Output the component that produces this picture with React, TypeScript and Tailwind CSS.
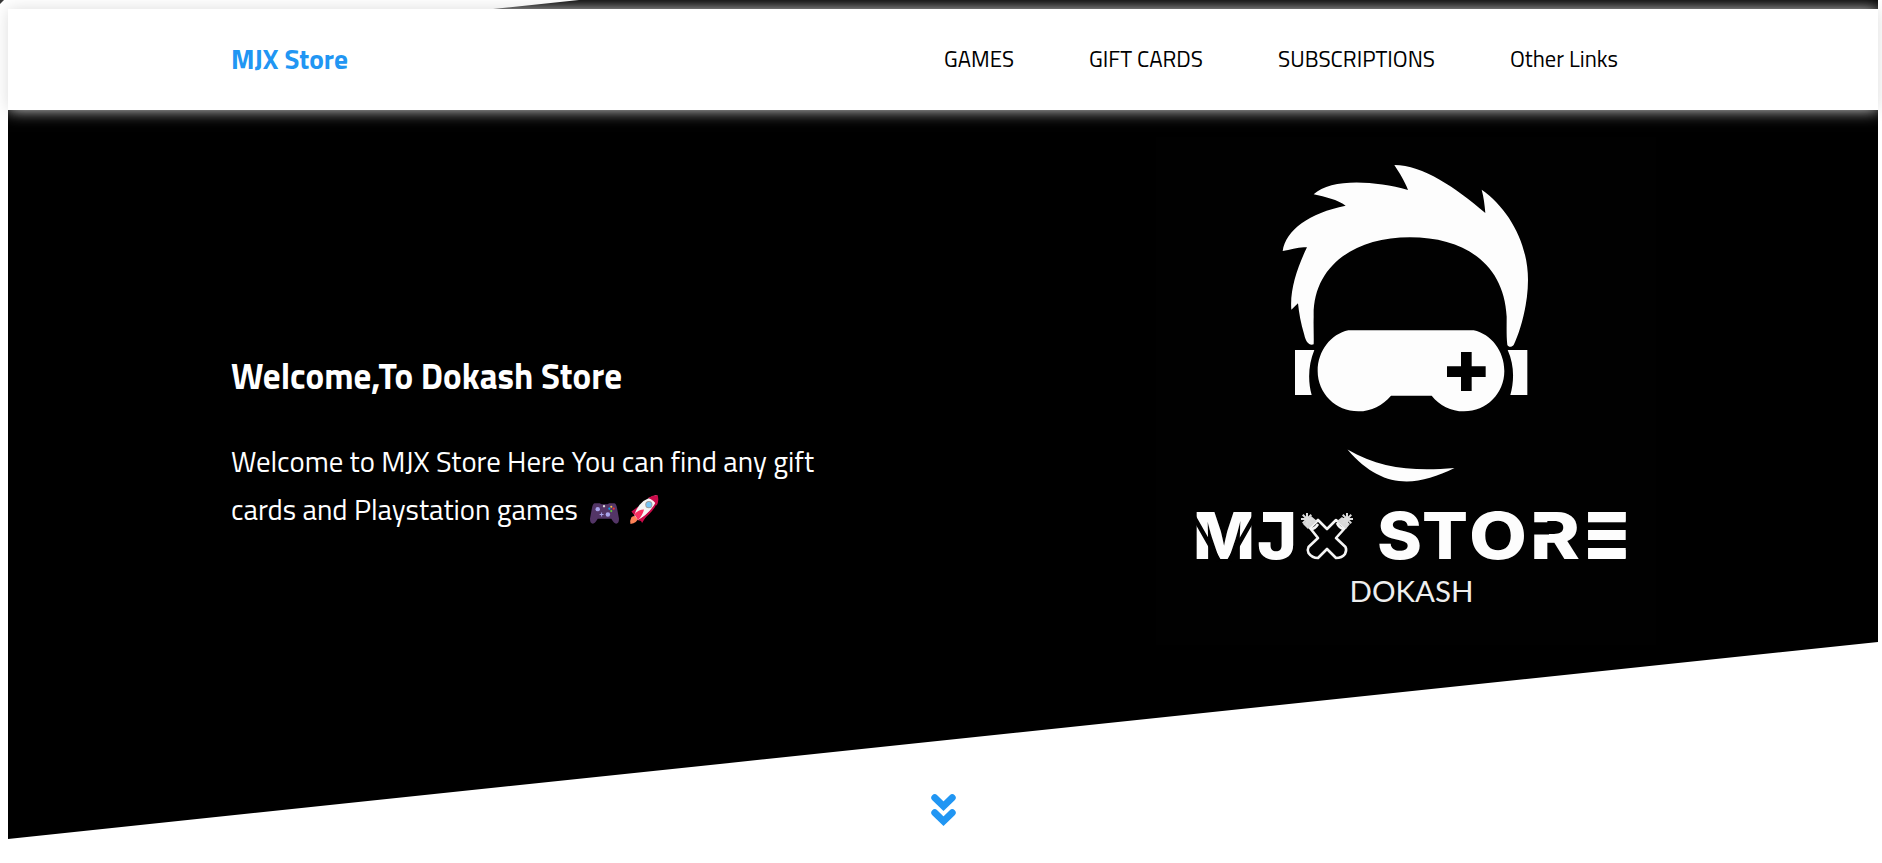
import React from "react";

const links = [
  { label: "GAMES", cls: "w-[70px] mr-[75px]", w: 70 },
  { label: "GIFT CARDS", cls: "w-[114px] mr-[75px]", w: 114 },
  { label: "SUBSCRIPTIONS", cls: "w-[157px] mr-[75px]", w: 157 },
  { label: "Other Links", cls: "w-[108px]", w: 108 },
];

function Fit({ text, width, size, weight, fill }: { text: string; width: number; size: number; weight: number; fill: string }) {
  return (
    <svg width={width} height={size * 1.5} className="block overflow-visible" aria-label={text}>
      <text x={0} y={size * 1.1} textLength={width} lengthAdjust="spacingAndGlyphs" fontSize={size} fontWeight={weight} fill={fill} fontFamily="'Titillium Web','Open Sans',sans-serif">
        {text}
      </text>
    </svg>
  );
}

function Letter({ c, x, w, y = 558.5, size = 64 }: { c: string; x: number; w: number; y?: number; size?: number }) {
  return (
    <text x={x} y={y} textLength={w} lengthAdjust="spacingAndGlyphs" fontSize={size} fontWeight={800} fontFamily="Inter, sans-serif">
      {c}
    </text>
  );
}

function Burst({ x, y }: { x: number; y: number }) {
  return (
    <g stroke="#ddd" strokeWidth="2">
      {[0, 45, 90, 135].map((a) => (
        <line key={a} x1={x - 6} y1={y} x2={x + 6} y2={y} transform={`rotate(${a} ${x} ${y})`} />
      ))}
    </g>
  );
}

function StoreLogo() {
  return (
    <svg viewBox="1156 137 500 508" className="block h-[508px] w-[500px] shrink-0 bg-[#010101]" fill="#fdfdfd">
      <g transform="translate(1260 150) scale(.33333)">
        <path d="M161 583C147 588 137 574 133 555C122 520 117 488 114 460L94 479C89 420 112 351 141 292C118 289 94 298 68 303C77 240 148 189 257 167C233 149 196 141 161 133C211 85 341 91 444 120C435 95 418 68 403 45C489 46 586 112 676 189C674 164 671 140 665 119C744 174 804 277 804 390C804 467 779 549 761 585C755 592 746 592 742 585C739 560 740 530 740 500C732 340 612 262 450 262C278 262 158 352 161 500C160 530 162 558 161 583Z" />
        <path d="M265 541H641C693 552 733 603 733 663C733 730 680 784 612 784C573 784 538 766 515 737H393C368 766 334 784 295 784C227 784 173 730 173 663C173 603 213 552 265 541Z" />
        <path d="M105 600H163C145 644 143 692 155 735H105ZM743 600H802V735H751C763 692 763 644 743 600Z" />
        <path fill="#010101" d="M603 606H635V649H677V681H635V723H603V681H561V649H603Z" />
      </g>
      <path d="M1347.500 449.500C1380 469 1415 471.500 1454.500 468C1416 487 1382 490 1347.500 449.500Z" />
      <Letter c="M" x={1193} w={62} />
      <path d="M1194 517L1219 561M1254 517L1229 561" stroke="#010101" strokeWidth="4.500" />
      <Letter c="J" x={1257} w={40} />
      <rect x="1263" y="512" width="20" height="10" />
      <g fill="none" stroke="#f5f5f5" strokeWidth="2.600" strokeLinejoin="round">
        <path d="M1310 528L1318 520L1327 529L1336 520L1345 528L1336 538L1345.500 547Q1347 550 1345 554Q1342 558 1336 558L1327 549L1318 558Q1312 558 1308.500 553Q1307 550 1308.500 547L1318 538Z" />
        <path d="M1311 529Q1315 529 1318 524M1337 523Q1339 528 1344 529" />
      </g>
      <path d="M1303 524L1311 516L1317 521L1308 529ZM1342 517L1350 524L1346 529L1337 521Z" fill="#d9d9d9" />
      <Burst x={1307} y={519} />
      <Burst x={1347} y={519} />
      <Letter c="S" x={1377} w={45} />
      <Letter c="T" x={1422} w={46} />
      <Letter c="O" x={1469} w={58} />
      <Letter c="R" x={1530} w={50} />
      <Letter c="E" x={1584} w={45} />
      <rect x="1588.300" y="512" width="37.400" height="46.500" />
      <g fill="#010101">
        <rect x="1585" y="522.300" width="44" height="7.700" />
        <rect x="1585" y="540" width="44" height="8" />
        <rect x="1533" y="522.300" width="16" height="12.200" />
      </g>
      <text x="1349.500" y="602" textLength="124" lengthAdjust="spacingAndGlyphs" fontSize="28.500" fontFamily="Lato, sans-serif" fill="#eee">DOKASH</text>
    </svg>
  );
}

function Controller() {
  return (
    <svg viewBox="0 0 30 22" className="h-[22px] w-[29px]">
      <path fill="#533566" d="M5 1H10L12 2H18L20 1H25Q27 1 28 6L30 17Q30 22 27 22Q25 22 22 17H8Q5 22 3 22Q0 22 0 17L2 6Q3 1 5 1Z" />
      <g fill="#a9a5ec"><circle cx="8" cy="7" r="2.300" /><circle cx="18.500" cy="12.500" r="2.300" /><path d="M10 12h1.500v-1.500h1V12H14v1h-1.500v1.500h-1V13H10Z" /></g>
      <circle cx="14.500" cy="4" r="1.200" fill="#ddd" /><circle cx="22" cy="4.500" r="1.100" fill="#f9c23c" /><circle cx="24.500" cy="6.500" r="1.100" fill="#f8312f" /><circle cx="20" cy="6.500" r="1.100" fill="#00a6ed" /><circle cx="22" cy="9" r="1.100" fill="#5fc93c" />
    </svg>
  );
}

function Rocket() {
  return (
    <svg viewBox="0 0 30 30" className="h-[29px] w-[30px]">
      <path fill="#ff8257" d="M2 23Q6 20 9 24Q8 29 1 30Q0 27 2 23Z" />
      <path fill="#ca0b4a" d="M9 12L2 17L5 21L11 25L13 29L18 21Z" />
      <path fill="#f4f4f4" d="M5 21Q9 5 28 0Q30 8 22 16Q16 22 9 26Z" />
      <path fill="#ca0b4a" d="M19 3Q24 0 29 0Q31 6 28 11Q26 5 19 3Z" />
      <path fill="#ca0b4a" d="M28 9Q25 17 12 27L9 26Q22 18 28 6Z" />
      <path fill="#f92f60" d="M5 20Q9 15 15 15Q14 20 9 26Z" />
      <circle cx="20" cy="10" r="3.700" fill="#9b9b9b" /><circle cx="20" cy="10" r="2.700" fill="#74c4f5" />
    </svg>
  );
}

export default function App() {
  return (
    <div className="relative h-[863px] w-full overflow-hidden bg-white pl-2 pr-1 font-['Open_Sans',sans-serif]">
      <div className="absolute inset-x-0 top-0 h-[9px] bg-black [clip-path:polygon(579px_0,1878px_0,1878px_9px,493px_9px)]" />
      <div className="absolute left-0 top-0 h-[4px] w-[4px] bg-[#333] [clip-path:polygon(0_0,100%_0,0_100%)]" />
      <header className="relative z-10 mt-[9px] flex h-[101px] items-center bg-white pl-[223px] shadow-[0_0_15px_#ddd]">
        <a className="-mt-px w-[117px]"><Fit text="MJX Store" width={117} size={28} weight={700} fill="#2196f3" /></a>
        <nav className="-mt-px ml-[595.5px] flex">
          {links.map((l) => (
            <a key={l.label} className={l.cls}><Fit text={l.label} width={l.w} size={23} weight={400} fill="#000" /></a>
          ))}
        </nav>
      </header>
      <main className="flex h-[729px] bg-black pl-[223px] text-white [clip-path:polygon(0_0,100%_0,100%_532px,0_729px)]">
        <section className="w-[925px] pt-[239px]">
          <h1 className="h-[54px]"><Fit text="Welcome,To Dokash Store" width={391} size={36.5} weight={700} fill="#fff" /></h1>
          <div className="mt-[37px]">
            <div className="h-12"><Fit text="Welcome to MJX Store Here You can find any gift" width={583} size={29} weight={400} fill="#fff" /></div>
            <div className="flex h-12">
              <Fit text="cards and Playstation games" width={347} size={29} weight={400} fill="#fff" />
              <span className="ml-[12px] mt-[14px]"><Controller /></span>
              <span className="ml-[10px] mt-[7px]"><Rocket /></span>
            </div>
          </div>
        </section>
        <div className="pt-[27px]"><StoreLogo /></div>
      </main>
      <svg viewBox="0 0 26 33" className="absolute left-[931px] top-[794px] h-[33px] w-[26px]" fill="none" stroke="#2196f3" strokeWidth="7" strokeLinecap="round">
        <path d="M3.800 3.800L12.500 12.200L21.200 3.800M3.800 18.800L12.500 27.200L21.200 18.800" />
      </svg>
    </div>
  );
}
